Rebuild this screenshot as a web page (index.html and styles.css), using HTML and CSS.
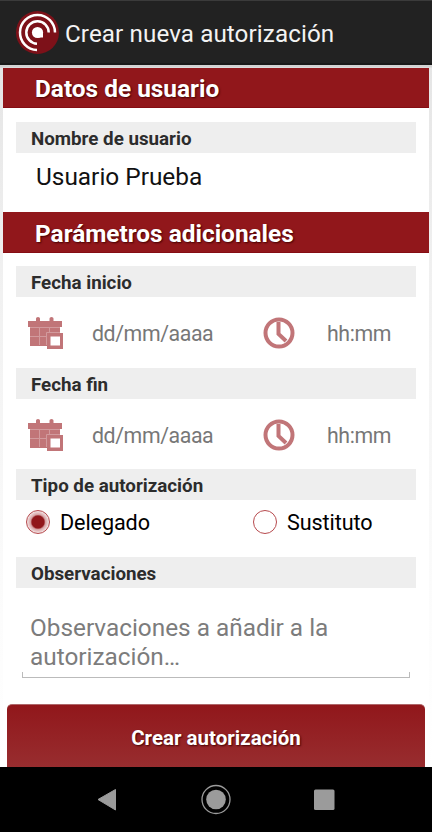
FILE: index.html
```html
<!DOCTYPE html>
<html lang="es">
<head>
<meta charset="utf-8">
<title>Crear nueva autorización</title>
<link rel="stylesheet" href="styles.css">
</head>
<body>
<svg class="defs" width="0" height="0">
  <symbol id="calendar" viewBox="0 0 36 34">
    <path d="M1 5h8V2.500Q9 1 11 1t2 1.500V5h9.500V2.500q0-1.500 2-1.500t2 1.500V5H35v6H1z"/>
    <path d="M3 11h30v5H20v14H3z"/>
    <path fill-rule="evenodd" d="M20 17h16V33H20zM23.500 20.500v9H33v-9z"/>
    <path class="grid-line" d="M3 11.500h30M12.500 12v17M22.500 12v5M3 20.500h16.500M19.500 29V16.500H33"/>
  </symbol>
  <symbol id="clock" viewBox="0 0 32 32">
    <circle cx="16" cy="16" r="13.500" fill="none" stroke="currentColor" stroke-width="4"/>
    <path d="M15.500 5v12l7.500 7" fill="none" stroke="currentColor" stroke-width="4"/>
  </symbol>
</svg>
<div class="screen">
  <header class="app-bar">
    <svg class="logo" viewBox="0 0 43 43">
      <circle cx="21.500" cy="21.500" r="21.500" fill="#7d1119"/>
      <circle cx="21.500" cy="21.500" r="5.600" fill="#fff"/>
      <path d="M22 21.500h5v5h-5z" fill="#fff"/>
      <g fill="none" stroke="#fff" stroke-width="2.500">
        <path d="M21 32.700A11.200 11.200 0 1 1 32.700 21.500"/>
        <path d="M21 39A17.500 17.500 0 1 1 39 21.500"/>
      </g>
    </svg>
    <h1>Crear nueva autorización</h1>
  </header>
  <main>
    <h2 class="first">Datos de usuario</h2>
    <h3>Nombre de usuario</h3>
    <p class="user">Usuario Prueba</p>
    <h2>Parámetros adicionales</h2>
    <h3>Fecha inicio</h3>
    <div class="date-row">
      <svg class="cal"><use href="#calendar"/></svg><span class="date">dd/mm/aaaa</span>
      <svg class="clk"><use href="#clock"/></svg><span>hh:mm</span>
    </div>
    <h3>Fecha fin</h3>
    <div class="date-row end">
      <svg class="cal"><use href="#calendar"/></svg><span class="date">dd/mm/aaaa</span>
      <svg class="clk"><use href="#clock"/></svg><span>hh:mm</span>
    </div>
    <h3>Tipo de autorización</h3>
    <div class="radio-row">
      <label class="option"><i class="radio selected"></i><span>Delegado</span></label>
      <label class="option"><i class="radio"></i><span>Sustituto</span></label>
    </div>
    <h3>Observaciones</h3>
    <div class="notes">Observaciones a añadir a la<br>autorización…</div>
    <button class="submit">Crear autorización</button>
  </main>
  <nav>
    <svg viewBox="0 0 432 65">
      <path d="M98 32.500L115.500 22.500V43z" fill="#9b9b9b" stroke="#9b9b9b" stroke-linejoin="round"/>
      <circle cx="216" cy="32.500" r="14" fill="none" stroke="#9b9b9b" stroke-width="1.300"/>
      <circle cx="216" cy="32.500" r="9.800" fill="#9b9b9b"/>
      <rect x="314" y="22.500" width="20.500" height="20.500" rx="1.500" fill="#9b9b9b"/>
    </svg>
  </nav>
</div>
</body>
</html>
```
FILE: styles.css
```css
* { box-sizing: border-box; }
body { margin: 0; font-family: Roboto, sans-serif; background: #fff; color: #111; }
h1, h2, h3, p { margin: 0; white-space: nowrap; }
.defs { display: block; }
.screen { width: 432px; height: 832px; display: flex; flex-direction: column; overflow: hidden; }
.app-bar {
  height: 65px; flex: none; display: flex; align-items: center; padding-left: 16px;
  background: #222; border-top: 1px solid #3b3b3b; border-bottom: 2px solid #191919;
}
.logo { width: 43px; height: 43px; margin-right: 6px; flex: none; }
h1 { font-size: 24.2px; font-weight: 400; color: #f3f3f3; padding-top: 3px; letter-spacing: 0.1px; }
main {
  height: 702px; flex: none; display: flex; flex-direction: column;
  border: solid transparent; border-width: 3px 3px 0;
  background: linear-gradient(#fff, #fff) padding-box, linear-gradient(#d2d2d2 0 2px, #e5e5e5 3px, #f0f0f0 200px, #fcfcfc 550px, #fff) border-box;
}
h2 {
  flex: none; height: 41px; padding-left: 32px; line-height: 43px; font-size: 24.4px; font-weight: 700;
  color: #fff; background: #91171b; border-bottom: 1px solid #850d13; text-shadow: 1px 1px 2px #400;
}
.first { height: 40px; line-height: 42px; margin-bottom: 1px; }
h3 {
  flex: none; height: 31px; margin: 13px 13px 0; padding-left: 15px; line-height: 34px;
  font-size: 18.75px; font-weight: 700; color: #2c2c2c; background: #eee;
}
.user { flex: none; height: 59px; padding: 10px 0 0 33px; font-size: 24.4px; line-height: 28px; }
.date-row { flex: none; height: 58px; padding: 14px 0 0 24px; display: flex; align-items: center; font-size: 21.3px; letter-spacing: -0.4px; color: #777; }
.date-row.end { height: 57px; }
.date-row svg { display: block; flex: none; color: #c17578; fill: #c17578; }
.date-row span { line-height: 28px; padding-top: 2px; }
.cal { width: 36px; height: 34px; }
.grid-line { fill: none; stroke: #d29a9d; stroke-width: 1; }
.clk { width: 32px; height: 32px; margin-right: 32px; }
.date-row .date { flex: none; width: 200px; padding-left: 29px; }
.radio-row { flex: none; height: 44px; padding-left: 23px; display: flex; }
.option { flex: none; width: 227px; display: flex; align-items: center; font-size: 21.6px; letter-spacing: -0.1px; color: #000; }
.option span { padding-top: 1px; }
.option:last-child { width: 160px; }
.radio { width: 24px; height: 24px; margin-right: 10px; border: 1px solid #b74a4e; border-radius: 50%; }
.selected { background: radial-gradient(circle, #91171b 0 6px, #d7a3a5 7.5px, #f4e6e6 11px); }
.notes {
  flex: none; height: 78px; margin: 12px 19px 0; padding: 13px 8px 0; font-size: 24.35px; line-height: 29px; color: #7c7c7c;
  background: linear-gradient(#bbb, #bbb) left bottom / 1px 5px no-repeat, linear-gradient(#bbb, #bbb) right bottom / 1px 5px no-repeat;
  border-bottom: 1px solid #bbb; white-space: nowrap;
}
.submit {
  height: 63px; margin: auto 4px 0; padding: 3px 0 0; border: 0; border-top: 1px solid #ae6669; border-radius: 5px 5px 0 0;
  background: linear-gradient(#91171b, #982d2f); color: #fff; font: 700 20.5px Roboto, sans-serif; text-shadow: 1px 1px 2px #400;
}
nav { height: 65px; flex: none; background: #000; }
nav svg { display: block; width: 432px; height: 65px; }
```
